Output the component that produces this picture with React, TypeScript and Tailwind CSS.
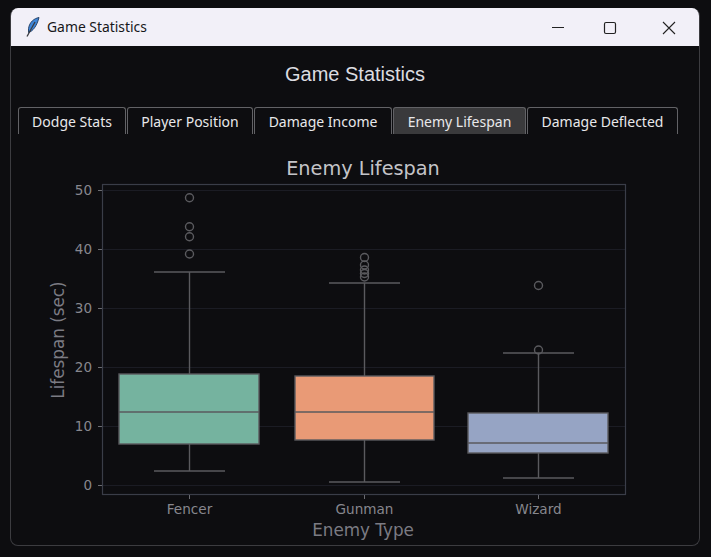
const tabs = [
  { label: "Dodge Stats", width: "w-[108px]" },
  { label: "Player Position", width: "w-[126px]" },
  { label: "Damage Income", width: "w-[138px]" },
  { label: "Enemy Lifespan", width: "w-[133px]", active: true },
  { label: "Damage Deflected", width: "w-[151px]" },
]

// chart coordinates are relative to the svg origin (page x - 11, page y - 150)
const ticksY = [
  { label: "50", y: 40 },
  { label: "40", y: 99 },
  { label: "30", y: 158 },
  { label: "20", y: 217 },
  { label: "10", y: 276 },
  { label: "0", y: 335 },
]

const boxes = [
  { name: "Fencer", cx: 178.5, x1: 108, x2: 248, top: 224, bottom: 294, median: 262, wTop: 122, wBottom: 321, fill: "#75b39f", outliers: [47.7, 76.7, 86.7, 104] },
  { name: "Gunman", cx: 353.5, x1: 284, x2: 423, top: 226, bottom: 290, median: 262, wTop: 133, wBottom: 332, fill: "#e99a76", outliers: [107.5, 115, 120, 123.5, 127] },
  { name: "Wizard", cx: 527.5, x1: 457, x2: 597, top: 263, bottom: 303, median: 293, wTop: 203, wBottom: 328, fill: "#96a4c4", outliers: [135.5, 200] },
]

function Chart() {
  return (
    <svg width="687" height="394" className="block" style={{ fontFamily: "'DejaVu Sans', sans-serif" }}>
      <text x="352" y="24.5" textAnchor="middle" fontSize="19.3" fill="#c4c4c8">
        Enemy Lifespan
      </text>

      {ticksY.map((t) => (
        <g key={t.label}>
          <line x1="92" x2="615" y1={t.y + 0.5} y2={t.y + 0.5} stroke="#1b1c24" />
          <line x1="87" x2="92" y1={t.y + 0.5} y2={t.y + 0.5} stroke="#6b6c72" />
          <text x="81" y={t.y + 5} textAnchor="end" fontSize="13.5" fill="#87878e">
            {t.label}
          </text>
        </g>
      ))}

      {boxes.map((b) => (
        <g key={b.name} stroke="#5a5a5e" strokeWidth="1.4">
          <line x1={b.cx} x2={b.cx} y1={b.wTop} y2={b.top} />
          <line x1={b.cx} x2={b.cx} y1={b.bottom} y2={b.wBottom} />
          <line x1={b.cx - 35.5} x2={b.cx + 35.5} y1={b.wTop} y2={b.wTop} />
          <line x1={b.cx - 35.5} x2={b.cx + 35.5} y1={b.wBottom} y2={b.wBottom} />
          <rect x={b.x1} y={b.top} width={b.x2 - b.x1} height={b.bottom - b.top} fill={b.fill} />
          <line x1={b.x1} x2={b.x2} y1={b.median} y2={b.median} />
          {b.outliers.map((y) => (
            <circle key={y} cx={b.cx} cy={y} r="4" fill="none" />
          ))}
          <line x1={b.cx} x2={b.cx} y1="345" y2="349" strokeWidth="1" stroke="#6b6c72" />
          <text x={b.cx} y="364" textAnchor="middle" fontSize="13.6" fill="#87878e" stroke="none">
            {b.name}
          </text>
        </g>
      ))}

      <rect x="91.5" y="34.5" width="523" height="310" fill="none" stroke="#3a3d48" strokeWidth="1.2" />

      <text x="352" y="386" textAnchor="middle" fontSize="16.8" fill="#7b7b83">
        Enemy Type
      </text>
      <text transform="translate(53 190) rotate(-90)" textAnchor="middle" fontSize="16.8" fill="#7b7b83">
        Lifespan (sec)
      </text>
    </svg>
  )
}

export default function App() {
  return (
    <div className="h-[557px] w-[711px] overflow-hidden bg-[#0d0d10] pl-[10px] pt-2">
      <div className="h-[538px] w-[690px] overflow-hidden rounded-lg border border-t-0 border-[#3c3c40] bg-[#0d0d10]">
        {/* Title bar */}
        <div className="flex h-[38px] items-center bg-[#f2f0f8] pl-[14px]">
          <svg width="16" height="22" viewBox="0 0 16 22" className="mr-[6px]">
            <path d="M14 1.5 C9 2.5 4.5 6 3.5 12.5 L3.5 16.5 C7.5 15.5 12 10 14 1.5 Z" fill="#3f86d8" stroke="#1f3a60" strokeWidth="0.9" />
            <path d="M10 6 L2 20.5" stroke="#3a3b40" strokeWidth="1.3" />
          </svg>
          <span className="font-['Noto_Sans','Open_Sans',sans-serif] text-[13.9px] text-[#17171a]">Game Statistics</span>
          <div className="ml-auto flex items-center text-[#1a1a1a]">
            <svg width="46" height="37" viewBox="0 0 46 37">
              <line x1="16" x2="28" y1="18.5" y2="18.5" stroke="#222" strokeWidth="1" />
            </svg>
            <svg width="58" height="37" viewBox="0 0 58 37">
              <rect x="22.5" y="13.5" width="11" height="11" rx="1.5" fill="none" stroke="#222" strokeWidth="1.2" />
            </svg>
            <svg width="59" height="37" viewBox="0 0 59 37">
              <path d="M23 13 L35 25 M35 13 L23 25" stroke="#222" strokeWidth="1.1" />
            </svg>
          </div>
        </div>

        <div className="pt-[15px] text-center font-['Liberation_Sans',sans-serif] text-[20px] leading-[26px] text-[#dcdce0]">
          Game Statistics
        </div>

        {/* Tabs */}
        <div className="mt-[20px] flex gap-px pl-[7px]">
          {tabs.map((tab) => (
            <div
              key={tab.label}
              className={`flex h-[27px] items-center justify-center rounded-t-[3px] border border-b-0 border-[#626266] font-['Noto_Sans','Open_Sans',sans-serif] text-[14px] text-[#e8e8ea] ${tab.width} ${
                tab.active ? "bg-[#3a3a3c]" : "bg-[#0d0d10]"
              }`}
            >
              {tab.label}
            </div>
          ))}
        </div>

        <div className="mt-[16px]">
          <Chart />
        </div>
      </div>
    </div>
  )
}
